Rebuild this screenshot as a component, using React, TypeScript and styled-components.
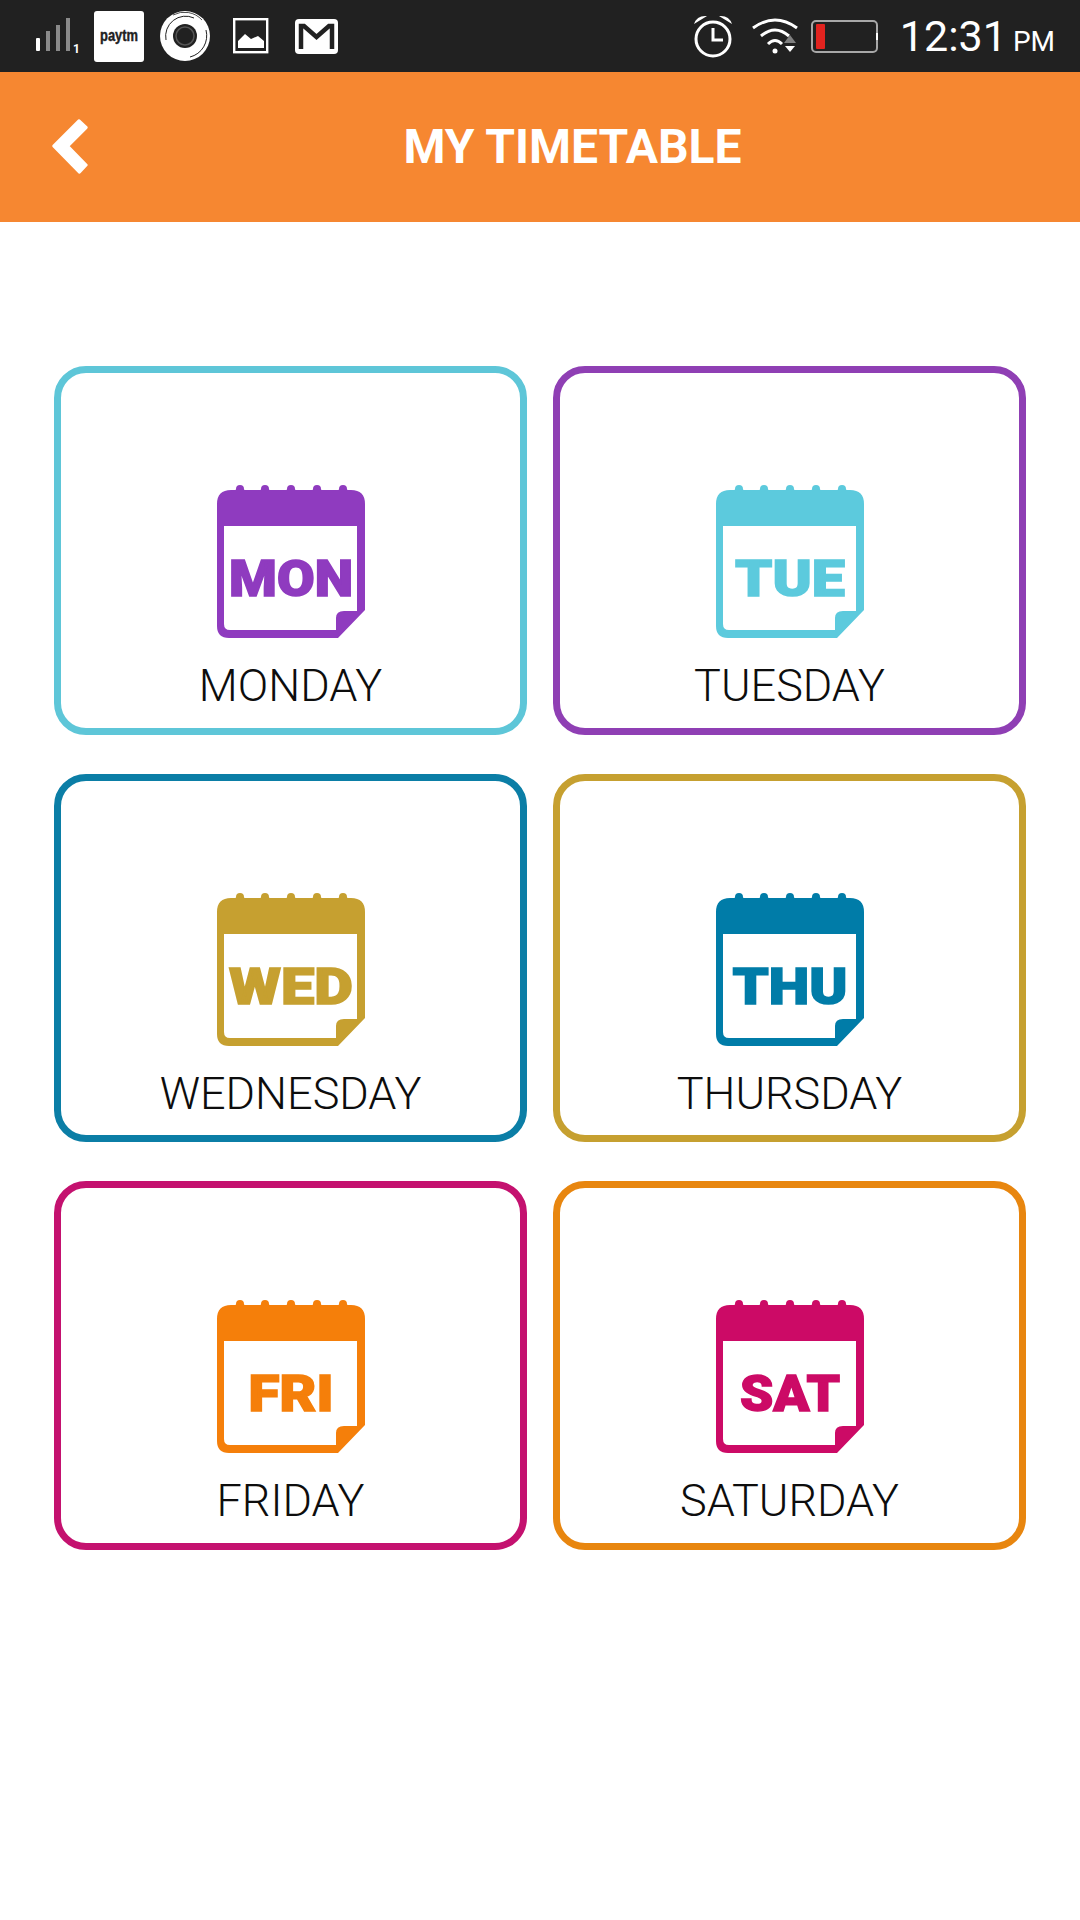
import React from 'react'
import styled, { createGlobalStyle } from 'styled-components'

const GlobalStyle = createGlobalStyle`
  html, body {
    margin: 0;
    padding: 0;
    background-color: #ffffff;
    font-family: Roboto, 'Liberation Sans', sans-serif;
  }
`

const Page = styled.div`
  width: 1080px;
  min-height: 1920px;
  background-color: #ffffff;
`

const StatusBar = styled.div`
  height: 72px;
  padding: 0 25px 0 36px;
  box-sizing: border-box;
  background-color: #212121;
  display: flex;
  align-items: center;
  justify-content: space-between;
`

const StatusGroup = styled.div`
  display: flex;
  align-items: center;
`

const StatusIcon = styled.svg<{ $gap?: number }>`
  display: block;
  flex: none;
  overflow: visible;
  margin-left: ${(p) => p.$gap || 0}px;
`

const Clock = styled.div`
  margin-left: 21px;
  padding-top: 5px;
  color: #ffffff;
  font-size: 43px;
  font-weight: 400;
  line-height: 67px;
  white-space: nowrap;
`

const Meridiem = styled.span`
  margin-left: 6px;
  font-size: 28px;
`

const Header = styled.div`
  height: 150px;
  padding: 0 24px 2px 51px;
  box-sizing: border-box;
  background-color: #f68731;
  display: flex;
  align-items: center;
`

const Title = styled.div`
  flex: 1;
  color: #ffffff;
  font-size: 48px;
  font-weight: 700;
  text-align: center;
`

const Grid = styled.div`
  padding: 144px 54px 0;
  display: grid;
  grid-template-columns: 473px 473px;
  grid-auto-rows: 368.5px;
  column-gap: 26px;
  row-gap: 39px;
`

const Card = styled.div<{ $color: string }>`
  box-sizing: border-box;
  padding-top: 112px;
  border: 7px solid ${(p) => p.$color};
  border-radius: 32px;
  display: flex;
  flex-direction: column;
  align-items: center;
`

const CalendarSvg = styled.svg`
  display: block;
  flex: none;
  filter: blur(0.7px);
`

const CalendarLabel = styled.text`
  font-family: Roboto, 'Liberation Sans', sans-serif;
  font-size: 50px;
  font-weight: 900;
  text-anchor: middle;
`

const DayName = styled.div`
  margin-top: 21px;
  color: #0d0d0d;
  font-size: 45px;
  font-weight: 300;
  line-height: 54px;
`

const days = [
	{ name: 'MONDAY', short: 'MON', border: '#5ec6d8', icon: '#8f3bbf', width: 124 },
	{ name: 'TUESDAY', short: 'TUE', border: '#8f3fb4', icon: '#5ccadd', width: 110 },
	{ name: 'WEDNESDAY', short: 'WED', border: '#0b7ea6', icon: '#c6a030', width: 124 },
	{ name: 'THURSDAY', short: 'THU', border: '#c6a030', icon: '#007ca8', width: 115 },
	{ name: 'FRIDAY', short: 'FRI', border: '#c4116f', icon: '#f57f0a', width: 85 },
	{ name: 'SATURDAY', short: 'SAT', border: '#e8860f', icon: '#cc0a66', width: 100 }
]

const CalendarIcon = ({ color, text, width }: { color: string; text: string; width: number }) => (
	<CalendarSvg width="150" height="153" viewBox="0 0 150 153">
		{[24, 49, 75, 101, 127].map((x) => (
			<path key={x} fill={color} d={`M${x - 10} 7Q${x - 4} 6 ${x - 4} 4A4 4 0 0 1 ${x + 4} 4Q${x + 4} 6 ${x + 10} 7Z`} />
		))}
		<path
			fillRule="evenodd"
			fill={color}
			d="M15 5H135Q149 5 149 19V125L122 153H13Q1 153 1 141V19Q1 5 15 5ZM8 41V139Q8 145 14 145H120V133Q120 126 128 126H141V41Z"
		/>
		<CalendarLabel
			x="75"
			y="110.5"
			fill={color}
			stroke={color}
			strokeWidth="1.5"
			textLength={width}
			lengthAdjust="spacingAndGlyphs"
		>
			{text}
		</CalendarLabel>
	</CalendarSvg>
)

const App = () => (
	<Page>
		<GlobalStyle />
		<StatusBar>
			<StatusGroup>
				<StatusIcon width="44" height="36" viewBox="0 0 44 36">
					<rect x="0" y="20" width="4" height="13" rx="1" fill="#ffffff" />
					<rect x="10" y="13" width="4" height="20" fill="#8a8a8a" />
					<rect x="20" y="7" width="4" height="26" fill="#8a8a8a" />
					<rect x="30" y="0" width="4" height="33" fill="#8a8a8a" />
					<text x="37" y="35" fill="#ffffff" fontSize="12" fontWeight="700" fontFamily="Roboto, sans-serif">
						1
					</text>
				</StatusIcon>
				<StatusIcon $gap={14} width="50" height="51" viewBox="0 0 50 51">
					<rect width="50" height="51" rx="3" fill="#ffffff" />
					<text
						x="6"
						y="30"
						fill="#212121"
						stroke="#212121"
						strokeWidth="0.4"
						fontSize="16"
						fontWeight="700"
						fontFamily="'Liberation Sans', sans-serif"
						textLength="38"
						lengthAdjust="spacingAndGlyphs"
					>
						paytm
					</text>
				</StatusIcon>
				<StatusIcon $gap={16} width="50" height="52" viewBox="0 0 50 52">
					<circle cx="25" cy="26" r="25" fill="#ffffff" />
					<path d="M6 30A20 20 0 0 1 34 8" fill="none" stroke="#212121" strokeWidth="1" />
					<path d="M46 20A22 22 0 0 1 30 47" fill="none" stroke="#212121" strokeWidth="1" />
					<path d="M13 5A24 24 0 0 1 42 10" fill="none" stroke="#212121" strokeWidth="0.8" />
					<circle cx="25" cy="26" r="12" fill="#212121" />
					<circle cx="25" cy="26" r="9" fill="none" stroke="#555555" strokeWidth="1.5" />
				</StatusIcon>
				<StatusIcon $gap={23} width="36" height="36" viewBox="0 0 36 36">
					<rect x="1.2" y="1.2" width="33" height="33" fill="none" stroke="#ffffff" strokeWidth="2.4" />
					<path d="M5 30V23L12 16L18 21L25 18L31 23V30Z" fill="#ffffff" />
				</StatusIcon>
				<StatusIcon $gap={26} width="43" height="35" viewBox="0 0 43 35">
					<rect width="43" height="35" rx="4" fill="#ffffff" />
					<path d="M6 30V7H9L21.5 18L34 7H37V30" fill="none" stroke="#212121" strokeWidth="4.5" />
				</StatusIcon>
			</StatusGroup>
			<StatusGroup>
				<StatusIcon width="40" height="44" viewBox="0 0 40 44">
					<circle cx="20" cy="25" r="17" fill="none" stroke="#ffffff" strokeWidth="3" />
					<path d="M20 14V26H30" fill="none" stroke="#ffffff" strokeWidth="3" />
					<path d="M1 10Q4 1 14 2Z" fill="#ffffff" />
					<path d="M39 10Q36 1 26 2Z" fill="#ffffff" />
				</StatusIcon>
				<StatusIcon $gap={19} width="46" height="36" viewBox="0 0 46 36">
					<path d="M1 10Q23 -6 45 10" fill="none" stroke="#ffffff" strokeWidth="3" />
					<path d="M9 18Q23 6 37 18" fill="none" stroke="#ffffff" strokeWidth="3" />
					<path d="M16 26Q23 19 30 26" fill="none" stroke="#ffffff" strokeWidth="3" />
					<circle cx="23" cy="33" r="2.5" fill="#ffffff" />
					<path d="M32 25L38 17L44 25Z" fill="#808080" />
					<path d="M33 28H43L38 34Z" fill="#ffffff" />
				</StatusIcon>
				<StatusIcon $gap={13} width="68" height="33" viewBox="0 0 68 33">
					<rect x="1" y="1" width="65" height="31" rx="4" fill="none" stroke="#a8a8a8" strokeWidth="2" />
					<rect x="5" y="4" width="9" height="25" rx="1" fill="#e2231f" />
					<rect x="65" y="13" width="2" height="7" fill="#ffffff" />
				</StatusIcon>
				<Clock>
					12:31<Meridiem>PM</Meridiem>
				</Clock>
			</StatusGroup>
		</StatusBar>
		<Header>
			<svg width="38" height="58" viewBox="-1 -1 38 58">
				<path
					d="M1.5 28L27 2.5L34.5 9.5L16 28L34.5 47L27.5 54.5Z"
					fill="#ffffff"
					stroke="#ffffff"
					strokeWidth="2.5"
					strokeLinejoin="round"
				/>
			</svg>
			<Title>MY TIMETABLE</Title>
		</Header>
		<Grid>
			{days.map((day) => (
				<Card key={day.name} $color={day.border}>
					<CalendarIcon color={day.icon} text={day.short} width={day.width} />
					<DayName>{day.name}</DayName>
				</Card>
			))}
		</Grid>
	</Page>
)

export default App
